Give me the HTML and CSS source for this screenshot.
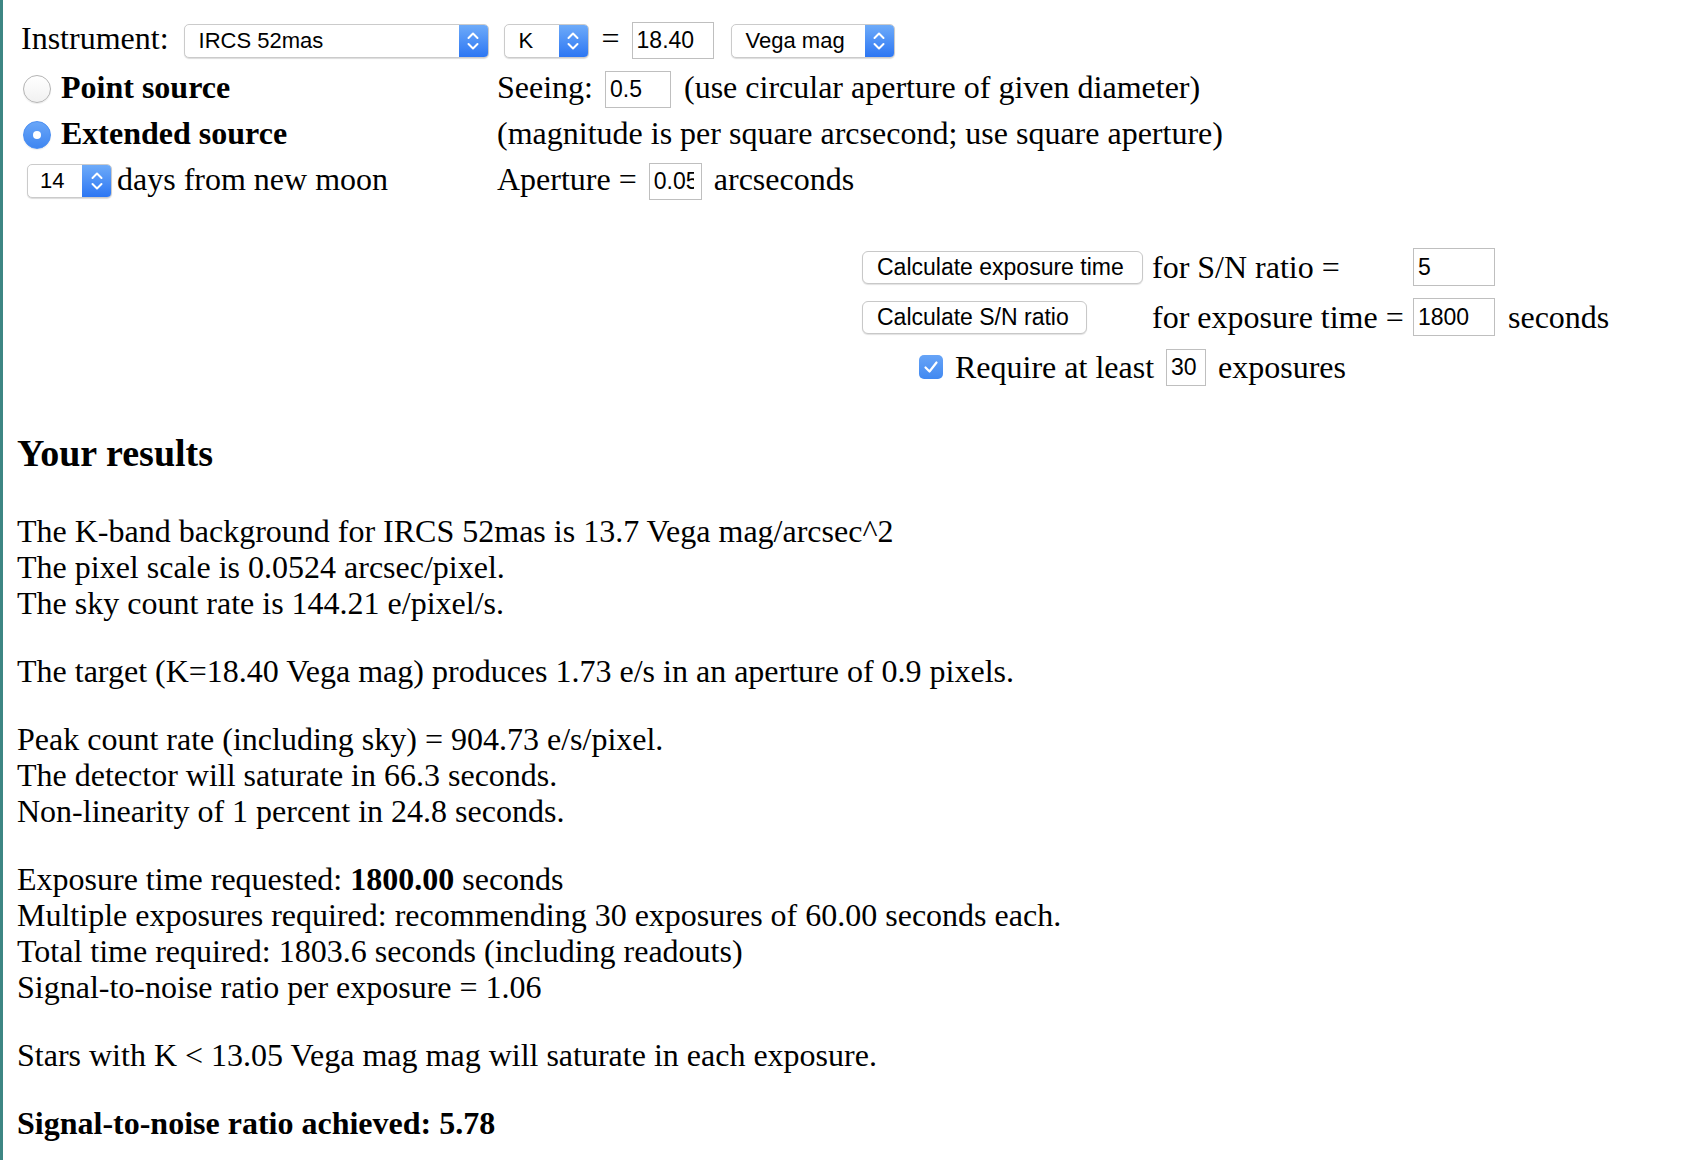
FILE: index.html
```html
<!DOCTYPE html>
<html>
<head>
<meta charset="utf-8">
<title>IRCS exposure time calculator</title>
<link rel="stylesheet" href="styles.css">
</head>
<body>
<div class="page">
  <form class="form">
    <div class="row-top">
      <span class="lbl">Instrument:</span>
      <span class="select sel-inst"><span class="select-value">IRCS 52mas</span><span class="select-arrow"><svg width="14" height="24" viewBox="0 0 14 24"><path d="M2.5 9 L7 4.5 L11.5 9 M2.5 15 L7 19.5 L11.5 15" fill="none" stroke="#fff" stroke-width="2" stroke-linecap="round" stroke-linejoin="round"/></svg></span></span>
      <span class="select sel-band"><span class="select-value">K</span><span class="select-arrow"><svg width="14" height="24" viewBox="0 0 14 24"><path d="M2.5 9 L7 4.5 L11.5 9 M2.5 15 L7 19.5 L11.5 15" fill="none" stroke="#fff" stroke-width="2" stroke-linecap="round" stroke-linejoin="round"/></svg></span></span>
      <span class="lbl eq">=</span>
      <input class="num num-mag" type="text" value="18.40">
      <span class="select sel-unit"><span class="select-value">Vega mag</span><span class="select-arrow"><svg width="14" height="24" viewBox="0 0 14 24"><path d="M2.5 9 L7 4.5 L11.5 9 M2.5 15 L7 19.5 L11.5 15" fill="none" stroke="#fff" stroke-width="2" stroke-linecap="round" stroke-linejoin="round"/></svg></span></span>
    </div>

    <div class="opts">
      <div class="cell"><span class="radio"></span><span class="lbl opt-label">Point source</span></div>
      <div class="cell"><span class="lbl">Seeing:</span><input class="num num-seeing" type="text" value="0.5"><span class="lbl">(use circular aperture of given diameter)</span></div>

      <div class="cell"><span class="radio radio-on"></span><span class="lbl opt-label">Extended source</span></div>
      <div class="cell"><span class="lbl">(magnitude is per square arcsecond; use square aperture)</span></div>

      <div class="cell"><span class="select sel-moon"><span class="select-value">14</span><span class="select-arrow"><svg width="14" height="24" viewBox="0 0 14 24"><path d="M2.5 9 L7 4.5 L11.5 9 M2.5 15 L7 19.5 L11.5 15" fill="none" stroke="#fff" stroke-width="2" stroke-linecap="round" stroke-linejoin="round"/></svg></span></span><span class="lbl moon-label">days from new moon</span></div>
      <div class="cell"><span class="lbl">Aperture =</span><input class="num num-ap" type="text" value="0.05"><span class="lbl">arcseconds</span></div>
    </div>

    <div class="calc">
      <button type="button" class="btn btn-exp">Calculate exposure time</button>
      <span class="calc-lbl">for S/N ratio =</span>
      <input class="num num-calc" type="text" value="5">
      <span></span>

      <button type="button" class="btn btn-sn">Calculate S/N ratio</button>
      <span class="calc-lbl">for exposure time =</span>
      <input class="num num-calc" type="text" value="1800">
      <span class="secs">seconds</span>

      <div class="req">
        <span class="check"><svg width="24" height="24" viewBox="0 0 24 24"><path d="M6.5 12.5 L10.5 16.5 L17.5 7.5" fill="none" stroke="#fff" stroke-width="2.2" stroke-linecap="round" stroke-linejoin="round"/></svg></span>
        <span>Require at least</span>
        <input class="num num-req" type="text" value="30">
        <span>exposures</span>
      </div>
    </div>
  </form>

  <div class="results">
    <h3>Your results</h3>
    <p>The K-band background for IRCS 52mas is 13.7 Vega mag/arcsec^2<br>
    The pixel scale is 0.0524 arcsec/pixel.<br>
    The sky count rate is 144.21 e/pixel/s.</p>
    <p>The target (K=18.40 Vega mag) produces 1.73 e/s in an aperture of 0.9 pixels.</p>
    <p>Peak count rate (including sky) = 904.73 e/s/pixel.<br>
    The detector will saturate in 66.3 seconds.<br>
    Non-linearity of 1 percent in 24.8 seconds.</p>
    <p>Exposure time requested: <b>1800.00</b> seconds<br>
    Multiple exposures required: recommending 30 exposures of 60.00 seconds each.<br>
    Total time required: 1803.6 seconds (including readouts)<br>
    Signal-to-noise ratio per exposure = 1.06</p>
    <p>Stars with K &lt; 13.05 Vega mag mag will saturate in each exposure.</p>
    <p><b>Signal-to-noise ratio achieved: 5.78</b></p>
  </div>
</div>
</body>
</html>
```

FILE: styles.css
```css
html, body {
  margin: 0;
  padding: 0;
  background: #fff;
}

body {
  font-family: "Liberation Serif", "Times New Roman", serif;
  font-size: 32px;
  line-height: 36px;
  color: #000;
}

.page {
  border-left: 3px solid #3d8683;
  min-height: 1160px;
  padding: 18px 0 0 14px;
  box-sizing: border-box;
}

.form {
  margin: 0;
}

/* text labels sit slightly above the control centre line */
.lbl {
  margin-bottom: 5px;
}

/* ---- top row ---- */
.row-top {
  display: flex;
  align-items: center;
  height: 45px;
  padding-left: 4px;
}

.select {
  display: inline-flex;
  align-items: stretch;
  height: 34px;
  box-sizing: border-box;
  border: 1px solid #cbcbcb;
  border-radius: 5px;
  background: #fff;
  box-shadow: 0 1px 1px rgba(0, 0, 0, 0.14);
  font-family: "Liberation Sans", Arial, sans-serif;
  font-size: 22px;
  line-height: 32px;
  overflow: hidden;
  flex: none;
}

.select-value {
  flex: 1;
  padding-left: 14px;
  white-space: nowrap;
}

.select-arrow {
  width: 29px;
  background: linear-gradient(#6eabf9, #2c76f3);
  display: flex;
  align-items: center;
  justify-content: center;
}

.select-arrow svg {
  display: block;
}

.sel-inst { width: 305px; margin-left: 15px; }
.sel-band { width: 85px; margin-left: 15px; }
.sel-unit { width: 164px; margin-left: 17px; }
.sel-moon { width: 85px; margin-left: 6px; }
.sel-moon .select-value { padding-left: 12px; }

.eq {
  margin-left: 13px;
}

.num {
  box-sizing: border-box;
  height: 37px;
  border: 1px solid #bfbfbf;
  border-radius: 0;
  background: #fff;
  color: #000;
  font-family: "Liberation Sans", Arial, sans-serif;
  font-size: 23px;
  padding: 0 0 0 4px;
  margin: 0;
  outline: none;
  flex: none;
}

.num-mag { width: 82px; margin-left: 12px; }

/* ---- options grid ---- */
.opts {
  display: grid;
  grid-template-columns: 476px auto;
  grid-auto-rows: 46px;
  align-items: center;
  margin-top: 3px;
  padding-left: 4px;
}

.cell {
  display: flex;
  align-items: center;
  white-space: nowrap;
}

.radio {
  position: relative;
  width: 28px;
  height: 28px;
  box-sizing: border-box;
  border-radius: 50%;
  border: 1px solid #b4b4b4;
  background: linear-gradient(#ffffff, #f1f1f1);
  box-shadow: 0 1px 1px rgba(0, 0, 0, 0.08);
  margin-left: 2px;
  margin-right: 10px;
  flex: none;
}

.radio-on {
  border-color: #4a8ef2;
  background: linear-gradient(#69a6f8, #3f86f1);
}

.radio-on::after {
  content: "";
  position: absolute;
  left: 9px;
  top: 9px;
  width: 8px;
  height: 8px;
  border-radius: 50%;
  background: #fff;
}

.opt-label {
  font-weight: bold;
}

.moon-label {
  margin-left: 5px;
}

.num-seeing { width: 66px; margin: 0 13px 0 12px; }
.num-ap { width: 53px; margin: 0 12px; padding-right: 7px; }

/* ---- calculate block ---- */
.calc {
  display: grid;
  grid-template-columns: 290px 261px 95px auto;
  grid-template-rows: 50px 50px 50px;
  align-items: center;
  margin-left: 845px;
  margin-top: 38px;
  white-space: nowrap;
}

.btn {
  justify-self: start;
  box-sizing: border-box;
  height: 33px;
  padding: 0 0 0 14px;
  text-align: left;
  border: 1px solid #c8c8c8;
  border-radius: 6px;
  background: #fff;
  box-shadow: 0 1px 1px rgba(0, 0, 0, 0.12);
  color: #000;
  font-family: "Liberation Sans", Arial, sans-serif;
  font-size: 23px;
  line-height: 31px;
}

.btn-exp { width: 281px; }
.btn-sn { width: 225px; }

.num-calc { width: 82px; height: 38px; }

.req {
  grid-column: 1 / 3;
  display: flex;
  align-items: center;
  padding-left: 57px;
}

.check {
  width: 24px;
  height: 24px;
  border-radius: 5px;
  background: linear-gradient(#67a4f7, #4189f1);
  margin-right: 12px;
  flex: none;
}

.check svg {
  display: block;
}

.num-req { width: 40px; margin: 0 12px; }

/* ---- results ---- */
.results h3 {
  font-size: 38px;
  line-height: 44px;
  font-weight: bold;
  margin: 39px 0 38px;
}

.results p {
  margin: 32px 0;
}
```
